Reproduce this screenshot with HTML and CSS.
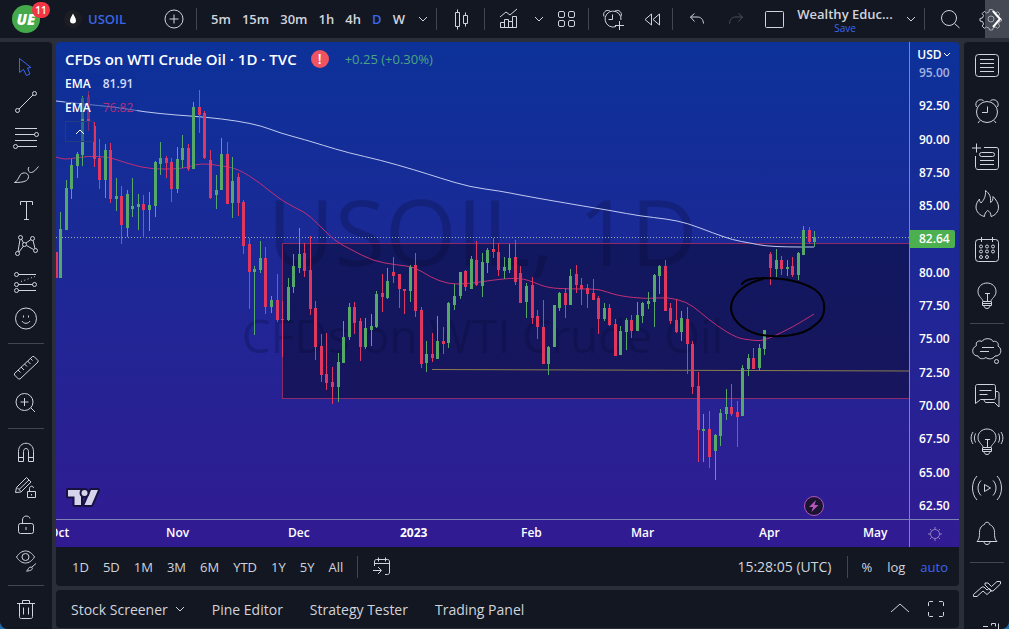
FILE: index.html
```html
<!DOCTYPE html>
<html lang="en">
<head>
  <meta charset="UTF-8" />
  <meta name="viewport" content="width=device-width, initial-scale=1.0" />
  <title>USOIL 82.64</title>
  <link rel="stylesheet" href="styles.css">
</head>
<body>
<div class="app">

  <header class="topbar">
    <button class="account" aria-label="Account"><span class="avatar">UE</span><span class="badge">11</span></button>
    <button class="symbol">
      <svg class="drop" viewBox="0 0 18 18"><circle cx="9" cy="9" r="9" fill="#1c1e24"/><path d="M9 3.500C10 6 12 8 12 10.500a3 3 0 0 1-6 0C6 8 8 6 9 3.500z" fill="#fff"/></svg>
      USOIL
    </button>
    <button class="tool line" aria-label="Compare"><svg class="icon" viewBox="0 0 28 28"><circle cx="15" cy="14" r="9"/><path d="M15 9.500v9M10.500 14h9"/></svg></button>
    <nav class="intervals">
      <button>5m</button><button>15m</button><button>30m</button><button>1h</button><button>4h</button><button class="active">D</button><button>W</button>
    </nav>
    <button class="tool arrow line" aria-label="Intervals"><svg class="mini" viewBox="0 0 10 10"><path d="M1 3l4 4 4-4"/></svg></button>
    <button class="tool line" aria-label="Chart type"><svg class="icon" viewBox="0 0 28 28"><path d="M8.500 7.500h4v14h-4zM10.500 4.500v3M10.500 21.500v3M16.500 10.500h4v8h-4zM18.500 7.500v3M18.500 18.500v3"/></svg></button>
    <button class="tool" aria-label="Indicators"><svg class="icon" viewBox="0 0 28 28"><path d="M5 12l6-5 4 3 7-6M5.500 22.500v-5h4v5zM9.500 22.500v-8h4v8M13.500 22.500v-6h4v6M17.500 22.500v-11h4v11zM5.500 22.500h16"/></svg></button>
    <button class="tool slim" aria-label="Indicator templates"><svg class="mini" viewBox="0 0 10 10"><path d="M1 3l4 4 4-4"/></svg></button>
    <button class="tool grid line" aria-label="Layout grid"><svg class="icon" viewBox="0 0 28 28"><rect x="5.500" y="6.500" width="6" height="6" rx="1.500"/><rect x="15.500" y="6.500" width="6" height="6" rx="1.500"/><rect x="5.500" y="15.500" width="6" height="6" rx="1.500"/><rect x="15.500" y="15.500" width="6" height="6" rx="1.500"/></svg></button>
    <button class="tool" aria-label="Add alert"><svg class="icon" viewBox="0 0 28 28"><path d="M17 21.500a8 8 0 1 1 5-6.500M13.500 9.500v5h-4M5 11.500c-1.500-4 2-7.500 6-5.500M22 11.500c1.500-4-2-7.500-6-5.500M20.500 16v9M16 20.500h9"/></svg></button>
    <button class="tool small line" aria-label="Replay"><svg class="icon" viewBox="0 0 28 28"><path d="M10.500 9v11L4 14.500zM18.500 9v11L12 14.500z"/></svg></button>
    <button class="tool" aria-label="Undo"><svg class="icon" viewBox="0 0 28 28"><path d="M11.500 8.500L7.500 12l4 4.500M7.500 12H14c4 0 6 2 6.500 6.500"/></svg></button>
    <button class="tool small off" aria-label="Redo"><svg class="icon" viewBox="0 0 28 28"><path d="M13.500 8.500l4 3.500-4 4.500M17.500 12H11c-4 0-6 2-6.500 6.500"/></svg></button>
    <button class="tool small" aria-label="Layout"><svg class="icon" viewBox="0 0 28 28"><rect x="4.500" y="6.500" width="18" height="16" rx="1"/></svg></button>
    <button class="layout-name"><span>Wealthy Educ...</span><span class="save">Save</span></button>
    <button class="tool arrow line" aria-label="Manage layouts"><svg class="mini" viewBox="0 0 10 10"><path d="M1 3l4 4 4-4"/></svg></button>
    <button class="tool" aria-label="Search"><svg class="icon" viewBox="0 0 28 28"><circle cx="14" cy="13" r="7.500"/><path d="M19.500 18.500l5 4.500"/></svg></button>
    <button class="tool small" aria-label="Settings"><svg class="icon" viewBox="0 0 28 28"><circle cx="14" cy="14" r="3"/><path d="M12.500 4.500h3l.5 2.500 2.500 1 2.200-1.300 2.100 2.100L21.500 11l1 2.500 2 .5v2l-2 .5-1 2.500 1.300 2.200-2.100 2.100-2.200-1.300-2.500 1-.5 2h-3l-.5-2-2.500-1-2.200 1.300-2.100-2.100L6.500 19l-1-2.500-2.500-.5v-2.500l2.500-.5 1-2.500-1.300-2 2.100-2.100L9.500 8 12 7z"/></svg></button>
    <button class="scroll-right" aria-label="Scroll right"><svg class="scroll-arrow" viewBox="0 0 12 20"><path d="M2 2l7 8-7 8"/></svg></button>
  </header>

  <aside class="drawbar">
    <button class="active" aria-label="Cursor"><svg class="icon" viewBox="0 0 28 28"><path d="M7.500 5.500v14l4-3 3 6 3.500-1.500-2.500-6 3.500-.5z"/></svg></button>
    <button aria-label="Trend line"><svg class="icon" viewBox="0 0 28 28"><circle cx="22.500" cy="4.500" r="2"/><circle cx="5.500" cy="21.500" r="2"/><path d="M7 20L21 6"/></svg></button>
    <button aria-label="Fib retracement"><svg class="icon" viewBox="0 0 28 28"><path d="M3 3.500h22M3 9.500h19.500M3 15.500h22M6 21.500h19"/><circle cx="24.500" cy="9.500" r="2"/><circle cx="3.500" cy="21.500" r="2"/></svg></button>
    <button aria-label="Brush"><svg class="icon" viewBox="0 0 28 28"><path d="M2.500 21.500c3-1 4-5 6-8 3-3 8-1.500 8 2 0 4.500-4.500 6-14 6zM17 6c-2 2.500 0 6 2.500 5.500 2.500-.5 4-2.500 7-6"/></svg></button>
    <button aria-label="Text"><svg class="icon" viewBox="0 0 28 28"><path d="M8.500 8V4.500h12V8M14.500 4.500v18M12 22.500h5"/></svg></button>
    <button aria-label="Patterns"><svg class="icon" viewBox="0 0 28 28"><circle cx="8.500" cy="4.500" r="2"/><circle cx="20.500" cy="5.500" r="2"/><circle cx="5.500" cy="20.500" r="2"/><circle cx="23.500" cy="17.500" r="2"/><circle cx="12.500" cy="11.500" r="2"/><path d="M8 6.500L6 18.500M9.500 6l2 4M14 10l5-3.500M21 7.500l2 8M7 19l4.500-6M14.500 12.500l7 4"/></svg></button>
    <button aria-label="Projection"><svg class="icon" viewBox="0 0 28 28"><circle cx="4.500" cy="5.500" r="2"/><circle cx="4.500" cy="15.500" r="2"/><circle cx="22.500" cy="15.500" r="2"/><circle cx="4.500" cy="21.500" r="2"/><path d="M6.500 5.500H24M6.500 15.500h14M6.500 21.500H24"/><path stroke-dasharray="1 2.500" d="M9 12.500L23 7.500"/></svg></button>
    <button aria-label="Icons"><svg class="icon" viewBox="0 0 28 28"><circle cx="14" cy="13.500" r="10.500"/><path d="M10 16c1.500 3 6.500 3 8 0M11.500 10.500v2M16.500 10.500v2"/></svg></button>
    <hr>
    <button aria-label="Measure"><svg class="icon" viewBox="0 0 28 28"><path d="M2.500 19.500l18-17 1.500 0 4 4v1.500l-18 17H6.500l-4-4zM6 16l2.500 2.500M9 13l3 3M12.500 10l2.500 2.500M15.500 7l3 3M18.500 4.500l2 2"/></svg></button>
    <button aria-label="Zoom in"><svg class="icon" viewBox="0 0 28 28"><circle cx="12.500" cy="12" r="8.500"/><path d="M12.500 8v8M8.500 12h8M19 18l4 4"/></svg></button>
    <hr>
    <button aria-label="Magnet"><svg class="icon" viewBox="0 0 28 28"><path d="M6.500 22.500v-10c0-11 15-11 15 0v10h-5v-10c0-4-5-4-5 0v10zM6.500 18.500h5M16.500 18.500h5"/></svg></button>
    <button aria-label="Stay in drawing mode"><svg class="icon" viewBox="0 0 28 28"><path d="M3.500 17.500l1-5L14.500 2.500 19 7 9 17zM5 12.500l4 4M7 14.500L17 5M15.500 16.500h8v6h-8zM17.500 16.500v-3c0-3 4-3 4-.5M19.500 19v1.500"/></svg></button>
    <button aria-label="Lock drawings"><svg class="icon" viewBox="0 0 28 28"><rect x="6.500" y="12.500" width="15" height="10" rx="2"/><path d="M10.500 12.500V9c0-5 6.500-5 7.500-1.500M14 16v3"/></svg></button>
    <button aria-label="Hide drawings"><svg class="icon" viewBox="0 0 28 28"><path d="M4.500 10c5-8 13-8 18 0-5 8-13 8-18 0z"/><circle cx="13.500" cy="10" r="3.500"/><path d="M14.500 24c2-1 1.500-4 4.500-4 2.500.5 2 4-4.500 4zM20 20l4-3.500"/></svg></button>
    <hr>
    <button aria-label="Remove"><svg class="icon" viewBox="0 0 28 28"><path d="M5 7.500h18M7.500 7.500v13c0 1.500.5 2 2 2h9c1.500 0 2-.5 2-2v-13M10.500 7.500v-3h7v3M11.500 11.500v7M16.500 11.500v7"/></svg></button>
  </aside>

  <main class="center">
    <section class="chart">
      <div class="pane">
        <div class="watermark"><span class="wm-symbol">USOIL, 1D</span><span class="wm-name">CFDs on WTI Crude Oil</span></div>
        <svg class="plot" viewBox="56 42 853 477" preserveAspectRatio="none" role="img" aria-label="WTI crude oil daily candles">
          <rect class="zone" x="282.500" y="243.500" width="640" height="155"/>
          <path class="support" d="M432 369.500L909 371"/>
          <path class="last-price" d="M56 237.500H909"/>
          <path class="ema-slow" id="emaSlow"/>
          <path class="ema-fast" id="emaFast"/>
          <g id="candles"></g>
          <path class="marker" d="M742 284c3-5 12-6 22-6 20 0 38 4 50 11 14 9 13 28 1 36-13 12-38 13-58 9-16-5-26-15-26-27 1-14 15-24 32-28"/>
        </svg>
        <div class="legend">
          <h1>CFDs on WTI Crude Oil · 1D · TVC <span class="alert">!</span><span class="change">+0.25 (+0.30%)</span></h1>
          <p><b>EMA</b><span>81.91</span></p>
          <p><b>EMA</b><span class="fast">76.82</span></p>
          <button aria-label="Collapse"><svg class="mini" viewBox="0 0 10 10"><path d="M1 7l4-4 4 4"/></svg></button>
        </div>
        <svg class="tv" viewBox="0 0 36 24"><path d="M3 4h13v15h-6.500v-8.500H3zM26 4h7l-6.500 15h-7z"/><circle cx="19.500" cy="7" r="3"/></svg>
        <button class="flash" aria-label="News"><svg viewBox="0 0 22 22"><circle cx="11" cy="11" r="9.500"/><path d="M13 5l-7 7h4l-1.500 5 7-7h-4z"/></svg></button>
      </div>
      <div class="prices">
        <button class="currency">USD<svg class="mini" viewBox="0 0 10 10"><path d="M2 4l3 3 3-3"/></svg></button>
        <ul>
          <li class="faded">95.00</li><li>92.50</li><li>90.00</li><li>87.50</li><li>85.00</li><li class="current">82.64</li><li>80.00</li><li>77.50</li><li>75.00</li><li>72.50</li><li>70.00</li><li>67.50</li><li>65.00</li><li>62.50</li>
        </ul>
      </div>
      <div class="dates"><span class="cut">Oct</span><span>Nov</span><span>Dec</span><b>2023</b><span>Feb</span><span>Mar</span><span>Apr</span><span>May</span></div>
      <button class="axis-gear" aria-label="Scale settings"><svg viewBox="0 0 16 16"><circle cx="8" cy="8" r="4.500"/><path d="M8 1v2M8 13v2M1 8h2M13 8h2M3 3l1.500 1.500M11.500 11.500L13 13M3 13l1.500-1.500M11.500 4.500L13 3"/></svg></button>
    </section>

    <div class="ranges">
      <button>1D</button><button>5D</button><button>1M</button><button>3M</button><button>6M</button><button>YTD</button><button>1Y</button><button>5Y</button><button>All</button>
      <button class="goto" aria-label="Go to date"><svg class="icon" viewBox="0 0 28 28"><path d="M6.500 13V9c0-1.500.5-2.500 2-2.500h11c1.500 0 2 1 2 2.500v10c0 1.500-.5 2.500-2 2.500H17M6.500 10.500h15M10.500 4.500v4M17.500 4.500v4M5 17.500h8M10 14l3.500 3.500L10 21"/></svg></button>
      <span class="clock">15:28:05 (UTC)</span>
      <div class="scale"><button>%</button><button>log</button><button class="active">auto</button></div>
    </div>

    <footer class="panels">
      <button>Stock Screener <svg class="mini" viewBox="0 0 10 10"><path d="M1 3l4 4 4-4"/></svg></button>
      <button>Pine Editor</button>
      <button>Strategy Tester</button>
      <button>Trading Panel</button>
      <div class="window-tools">
        <button aria-label="Open panel"><svg class="icon" viewBox="0 0 28 28"><path d="M5 17l9-8 9 8"/></svg></button>
        <button aria-label="Full screen"><svg class="icon" viewBox="0 0 28 28"><path d="M6.500 11V8c0-1 .5-1.500 1.500-1.500h3M17 6.500h3c1 0 1.500.5 1.500 1.500v3M21.500 17v3c0 1-.5 1.500-1.500 1.500h-3M11 21.500H8c-1 0-1.500-.5-1.500-1.500v-3"/></svg></button>
      </div>
    </footer>
  </main>

  <aside class="sidebar">
    <button aria-label="Watchlist"><svg class="icon" viewBox="0 0 28 28"><rect x="2.500" y="2.500" width="23" height="22" rx="3"/><path d="M7 7.500h14M7 11.500h14M7 15.500h14M7 19.500h14"/></svg></button>
    <button aria-label="Alerts"><svg class="icon" viewBox="0 0 28 28"><circle cx="14" cy="14" r="10.500"/><path d="M14.500 8.500v6H9M3.500 9C1 4 6 0 10.500 2.500M24.500 9c2.500-5-2.500-9-7-6.500M7 22.500l-2 2.500M21 22.500l2 2.500"/></svg></button>
    <button aria-label="Data window"><svg class="icon" viewBox="0 0 28 28"><path d="M3.500-.5v9M-1 4h9M11 3.500h12c2 0 2.500 1 2.500 2.500v16c0 2-.5 3.500-2.500 3.500H5c-2 0-2.500-1.500-2.500-3.500V12M7 16.500h14M7 20.500h14"/><rect x="6.500" y="8.500" width="15" height="4" rx="2"/></svg></button>
    <button aria-label="Hotlists"><svg class="icon" viewBox="0 0 28 28"><path d="M12.500.5c4 3 5.500 6 5 12 2-1 2.500-3 2.500-6 3 3 5.500 7 5.500 10.500 0 5-3.500 8.500-7.500 9.500 0-3.500-1.500-5-3.500-6-1.500 1.500-3 3-3 6C7 25.500 3 22 3 17c0-3 1.500-5.500 3.500-8 0 2 .5 3.500 1.500 4 3-3 5-7 4.500-12.500z"/></svg></button>
    <button aria-label="Calendar"><svg class="icon" viewBox="0 0 28 28"><rect x="2.500" y="3.500" width="23" height="22" rx="3"/><path d="M8.500 1v5M19.500 1v5"/><circle cx="8" cy="10.500" r="1.500"/><circle cx="14" cy="10.500" r="1.500"/><circle cx="20" cy="10.500" r="1.500"/><circle cx="8" cy="15.500" r="1.500"/><circle cx="14" cy="15.500" r="1.500"/><circle cx="20" cy="15.500" r="1.500"/><circle cx="8" cy="21" r="1.500"/><circle cx="14" cy="21" r="1.500"/></svg></button>
    <button aria-label="Ideas"><svg class="icon" viewBox="0 0 28 28"><path d="M10 19.500c0-3-5-4.500-5-10 0-5 4-8.500 9-8.500s9 3.500 9 8.500c0 5.500-5 7-5 10zM14.500 19v-7.500M12 11.500h5M9.500 19.500v4h9v-4M9.500 21.500h9M11 23.500c0 4 6 4 6 0"/></svg></button>
    <hr>
    <button aria-label="Minds"><svg class="icon" viewBox="0 0 28 28"><path d="M3.500 8.500c-1.500-4 3-5.500 5.500-4C11 .500 19 1 20 4.500c4-1 6 2 5 4.500 5 3 3 10.500-3 10-2 3.500-7 3.500-9 1.500-3 2-7 1.500-8-1.500-6 0-7.500-7.500-1.500-10.500zM9 10.500h12M7 14.500h9"/><circle cx="23.500" cy="24.500" r="2"/></svg></button>
    <button aria-label="Chat"><svg class="icon" viewBox="0 0 28 28"><path d="M2.500 20.500v-17c0-1 .5-2 2-2h16c1.500 0 2 1 2 2v11c0 1-.5 2-2 2h-13zM6.500 7.500h12M6.500 11.500h8M22.500 8.500h1.500c1.500 0 2 1 2 2v13.500l-4.500-4.500h-9l-2-3"/></svg></button>
    <button aria-label="Idea stream"><svg class="icon" viewBox="0 0 28 28"><path d="M10 18.500c0-3-5-4.500-5-10C5 3.500 9 0 14 0s9 3.500 9 8.500c0 5.500-5 7-5 10zM14.500 18v-7.500M12 10.500h5M9.500 18.500v4h9v-4M9.500 20.500h9M11 22.500c0 4 6 4 6 0M2.500 4.500c-1.500 3-1.500 6 0 9M0 3c-2.500 4-2.500 8 0 12M25.500 4.500c1.500 3 1.500 6 0 9M28 3c2.500 4 2.500 8 0 12"/></svg></button>
    <button aria-label="Streams"><svg class="icon" viewBox="0 0 28 28"><path d="M11.500 9.500v7l6-3.500zM8 5.500c-4 4-4 11 0 15M20 5.500c4 4 4 11 0 15M4 1c-6 6-6 18 0 24M24 1c6 6 6 18 0 24"/></svg></button>
    <button aria-label="Notifications"><svg class="icon" viewBox="0 0 28 28"><path d="M4 20.500h20c-2-2-2.500-4-2.500-9 0-5-2.500-7-5-8 0-3-5-3-5 0-2.500 1-5 3-5 8 0 5-.5 7-2.500 9zM11 20.500c0 4 6 4 6 0"/></svg></button>
    <hr>
    <button aria-label="Order panel"><svg class="icon" viewBox="0 0 28 28"><path d="M.500 18.500l8.500-7.500h2l3 3 2-1.500 2.500 2-4.500 4-4-3.500-6 5.500H.500zM27.500 5.500h-3.500l-5.500 5-3.500-3.500-3 0v2l6 6h2l7.500-7z"/></svg></button>
    <button aria-label="Market depth"><svg class="icon" viewBox="0 0 28 28"><path d="M10 4.500h5M18.500 3.500v-2h4v3M25.500 1.500v20"/></svg></button>
  </aside>

</div>
<script src="script.js"></script>
</body>
</html>
```
FILE: styles.css
```css
* {
  box-sizing: border-box;
}
body {
  margin: 0;
  background: #1c6cab;
  color: #d1d4dc;
  font-family: "Trebuchet MS", "Open Sans", "Noto Sans", sans-serif;
  font-size: 13px;
}
button {
  display: flex;
  align-items: center;
  justify-content: center;
  margin: 0;
  padding: 0;
  border: 0;
  background: none;
  color: inherit;
  font: inherit;
  cursor: pointer;
}
svg {
  display: block;
  flex: none;
}
hr {
  flex: none;
  width: 36px;
  height: 1px;
  margin: 6px 0;
  border: 0;
  background: #434651;
}
.icon {
  width: 28px;
  height: 28px;
  fill: none;
  stroke: currentColor;
  overflow: visible;
}
.mini {
  width: 10px;
  height: 10px;
  fill: none;
  stroke: currentColor;
}
.app {
  display: grid;
  grid-template-columns: 52px minmax(0, 1fr) 45px;
  grid-template-rows: 38px minmax(0, 1fr);
  gap: 4px;
  height: 100vh;
  background: #2a2e39;
  border-radius: 0 0 8px 8px;
  overflow: hidden;
}

/* top bar */
.topbar {
  grid-column: 1 / -1;
  position: relative;
  display: flex;
  background: #131722;
  overflow: hidden;
}
.account {
  position: relative;
  width: 52px;
}
.avatar {
  width: 28px;
  height: 28px;
  border-radius: 50%;
  background: #43a94a;
  color: #fff;
  font-size: 15px;
  font-weight: 800;
  font-style: italic;
  line-height: 28px;
}
.badge {
  position: absolute;
  left: 32px;
  top: 2px;
  width: 18px;
  border-radius: 9px;
  background: #f23645;
  color: #fff;
  font-size: 10px;
  font-weight: 600;
  line-height: 16px;
}
.symbol {
  width: 97px;
  padding-left: 12px;
  gap: 6px;
  justify-content: flex-start;
  color: #3a66e0;
  font-weight: 600;
}
.drop {
  width: 18px;
  height: 18px;
}
.tool {
  position: relative;
  flex: none;
  width: 48px;
}
.tool.small {
  width: 36px;
}
.tool.grid {
  width: 44px;
}
.tool.arrow {
  width: 28px;
}
.tool.slim {
  width: 12px;
}
.tool.off {
  color: #4a4e59;
}
.line::after {
  content: "";
  align-self: center;
  position: absolute;
  right: 0;
  width: 1px;
  height: 22px;
  background: #434651;
}
.intervals {
  display: flex;
  justify-content: space-between;
  width: 212px;
  padding: 0 4px 0 14px;
  font-weight: 600;
}
.active {
  color: #3a66f0;
}
.layout-name {
  flex: 1;
  flex-direction: column;
  min-width: 96px;
  font-weight: 600;
  line-height: 18px;
  white-space: nowrap;
}
.save {
  color: #3a66f0;
  font-size: 10px;
  font-weight: 400;
  line-height: 10px;
}
.scroll-right {
  position: absolute;
  right: 0;
  top: 0;
  width: 24px;
  height: 38px;
  background: rgba(120, 123, 134, 0.5);
}
.scroll-arrow {
  width: 12px;
  height: 20px;
  fill: none;
  stroke: #fff;
  stroke-width: 2;
}

/* side bars */
.drawbar,
.sidebar {
  display: flex;
  flex-direction: column;
  align-items: center;
  background: #131722;
  overflow: hidden;
}
.drawbar {
  padding-top: 7px;
  border-radius: 0 4px 0 0;
}
.drawbar button {
  flex: none;
  width: 52px;
  height: 36px;
}
.sidebar {
  padding-top: 1px;
  border-radius: 4px 0 0 0;
}
.sidebar button {
  flex: none;
  width: 45px;
  height: 46px;
}
.sidebar hr {
  width: 34px;
  margin: 4px 0;
}

/* chart */
.center {
  display: flex;
  flex-direction: column;
  min-width: 0;
  margin-right: 1px;
}
.chart {
  flex: 1;
  display: grid;
  grid-template-columns: minmax(0, 1fr) 50px;
  grid-template-rows: minmax(0, 1fr) 28px;
  min-height: 0;
  border-radius: 4px 4px 0 0;
  background: linear-gradient(#0c3299, #311b92);
  color: #fff;
  font-size: 12px;
  font-weight: 600;
  overflow: hidden;
}
.pane {
  position: relative;
  overflow: hidden;
}
.watermark {
  position: absolute;
  inset: 0;
  display: flex;
  flex-direction: column;
  align-items: center;
  justify-content: center;
  padding-bottom: 12px;
  color: rgba(10, 12, 60, 0.3);
  font-weight: 400;
  white-space: nowrap;
}
.wm-symbol {
  font-size: 92px;
  line-height: 120px;
}
.wm-name {
  font-size: 46px;
  line-height: 88px;
}
.plot {
  position: absolute;
  inset: 0;
  width: 100%;
  height: 100%;
  fill: none;
}
.zone {
  fill: rgba(8, 8, 40, 0.5);
  stroke: #8c2b66;
}
.support {
  stroke: #8a7d4e;
}
.last-price {
  stroke: #8fb5b0;
  stroke-dasharray: 1 2;
}
.ema-slow {
  stroke: #c0caf0;
}
.ema-fast {
  stroke: #c22f73;
}
.up {
  fill: #55a868;
}
.down {
  fill: #e0375f;
}
.marker {
  stroke: #000;
  stroke-width: 2;
  stroke-linecap: round;
}
.legend {
  position: absolute;
  left: 9px;
  top: 5px;
}
.legend h1 {
  display: flex;
  align-items: center;
  margin: 0;
  font-size: 15px;
  font-weight: 600;
  line-height: 24px;
}
.alert {
  width: 18px;
  height: 18px;
  margin: 0 16px 0 14px;
  border-radius: 50%;
  background: #ef5360;
  font-size: 14px;
  line-height: 18px;
  text-align: center;
}
.change {
  color: #4ba582;
  font-size: 13px;
  font-weight: 400;
}
.legend p {
  display: flex;
  gap: 12px;
  width: 72px;
  margin: 2px 0;
  background: rgba(15, 46, 152, 0.5);
  line-height: 22px;
}
.legend b {
  font-weight: 600;
}
.legend p span {
  color: #d3dcf8;
}
.legend p .fast {
  color: #b0307c;
  font-weight: 400;
}
.legend button {
  width: 29px;
  height: 21px;
  border: 1px solid #253a80;
  background: rgba(15, 46, 152, 0.5);
}
.tv {
  position: absolute;
  left: 9px;
  bottom: 9px;
  width: 36px;
  height: 24px;
  fill: #d6d3ec;
  stroke: #15123f;
  stroke-width: 4;
  stroke-linejoin: round;
  paint-order: stroke;
}
.flash {
  position: absolute;
  right: 84px;
  bottom: 2px;
}
.flash svg {
  width: 22px;
  height: 22px;
  fill: #1a1430;
  stroke: #b458b8;
}
.flash path {
  fill: #b458b8;
  stroke: none;
}
.prices {
  display: flex;
  flex-direction: column;
  border-left: 1px solid #7f83b4;
}
.currency {
  height: 22px;
  padding-top: 2px;
}
.prices ul {
  flex: 1;
  display: flex;
  flex-direction: column;
  justify-content: space-between;
  margin: 0;
  padding: 0 0 4px;
  list-style: none;
  line-height: 18px;
}
.prices li {
  padding-left: 9px;
}
.prices .faded {
  color: #a3b2e0;
}
.prices .current {
  width: 45px;
  border-radius: 0 2px 2px 0;
  background: #4caf50;
}
.dates {
  display: grid;
  grid-template-columns: 110fr 122fr 112fr 121fr 110fr 128fr 104fr 46fr;
  border-top: 1px solid #7f83b4;
  background: #311b92;
  line-height: 26px;
  overflow: hidden;
}
.dates b {
  font-weight: 700;
}
.dates .cut {
  margin-left: -7px;
}
.axis-gear {
  border-top: 1px solid #7f83b4;
  border-left: 1px solid #7f83b4;
}
.axis-gear svg {
  width: 16px;
  height: 16px;
  fill: none;
  stroke: #8f80bd;
}

/* bottom bars */
.ranges,
.panels {
  display: flex;
  align-items: center;
  background: #131722;
}
.ranges {
  gap: 14px;
  height: 39px;
  margin-bottom: 4px;
  padding: 0 11px 0 16px;
  border-radius: 0 0 4px 4px;
}
.goto {
  height: 22px;
  padding-left: 10px;
  border-left: 1px solid #434651;
}
.clock {
  margin-left: auto;
  font-size: 14px;
}
.scale {
  display: flex;
  align-items: center;
  gap: 15px;
  height: 22px;
  margin-left: 2px;
  padding-left: 13px;
  border-left: 1px solid #434651;
}
.panels {
  gap: 27px;
  height: 38px;
  margin-bottom: 1px;
  padding: 0 9px 0 15px;
  border-radius: 4px;
  font-size: 14px;
}
.panels > button {
  gap: 7px;
}
.window-tools {
  display: flex;
  gap: 8px;
  margin-left: auto;
}
```
FILE: script.js
```javascript
// x, high, body top, body bottom, low, up (1) or down (0)
const candles = [
  [56,252,252,278,278,0],[60,212,229,278,278,1],[66,180,188,230,230,1],[71,159,165,189,199,1],
  [77,152,154,166,178,1],[82,96,98,155,166,1],[88,91,97,121,131,0],[94,122,126,159,167,0],
  [99,139,158,180,189,0],[105,144,150,180,198,1],[110,143,150,199,203,0],[116,178,196,199,211,1],
  [121,186,196,225,244,0],[127,190,194,228,237,1],[132,178,206,209,217,1],[138,194,204,207,230,1],
  [143,195,204,210,238,0],[149,192,205,210,231,1],[155,161,162,206,217,1],[160,142,158,164,175,1],
  [166,156,158,163,178,0],[171,158,162,189,202,0],[177,147,159,189,193,1],[182,135,148,160,168,1],
  [188,144,148,169,171,0],[193,102,107,169,169,1],[199,90,107,115,133,0],[204,111,113,158,159,0],
  [210,150,160,198,199,0],[216,175,190,195,209,1],[221,138,154,190,190,1],[227,142,154,204,204,0],
  [232,157,181,203,218,1],[238,173,177,203,216,0],[243,200,202,246,254,0],[249,238,244,272,309,0],
  [254,266,269,272,335,1],[260,241,258,270,273,1],[265,247,258,307,314,0],[271,296,300,307,313,1],
  [277,274,300,320,322,0],[282,301,319,320,357,0],[288,278,287,320,321,1],[293,254,266,287,293,1],
  [299,228,254,268,273,1],[304,243,253,271,277,0],[310,236,270,309,315,0],[315,301,308,347,360,0],
  [321,334,346,375,382,0],[326,333,374,383,390,0],[332,367,382,387,404,0],[338,353,362,387,402,1],
  [343,321,337,363,363,1],[349,303,307,337,340,1],[354,302,307,323,334,0],[360,318,321,347,361,0],
  [365,318,328,347,349,1],[371,314,326,330,346,1],[376,291,294,327,328,1],[382,274,293,297,312,0],
  [387,268,281,298,299,1],[393,257,272,276,283,0],[399,274,274,289,308,0],[404,289,289,291,314,0],
  [410,265,267,291,302,1],[415,253,265,311,317,0],[421,307,310,364,368,0],[426,341,354,363,372,1],
  [432,333,354,358,362,0],[437,316,341,359,359,1],[443,327,341,344,354,0],[448,302,303,343,348,1],
  [454,284,296,305,310,1],[460,272,272,296,299,1],[465,270,271,287,291,0],[471,256,259,289,289,1],
  [476,241,260,285,286,0],[482,253,262,286,297,1],[487,248,250,263,273,1],[493,238,249,252,258,0],
  [498,243,252,270,276,0],[504,257,267,271,279,1],[509,244,258,270,273,1],[515,240,257,282,285,0],
  [520,266,273,303,303,0],[526,283,286,302,318,1],[532,277,285,318,324,0],[537,310,316,327,339,0],
  [543,300,327,364,364,0],[548,346,347,364,375,1],[554,305,305,347,347,1],[559,292,293,308,311,1],
  [565,288,293,305,318,0],[570,269,276,305,305,1],[576,265,274,285,293,0],[581,278,285,289,305,0],
  [587,284,288,294,308,0],[593,279,293,300,300,0],[598,296,298,319,334,0],[604,303,308,319,321,1],
  [609,304,308,325,326,0],[615,319,324,356,356,0],[620,326,331,355,355,1],[626,318,320,332,350,1],
  [631,315,320,331,338,0],[637,302,315,331,331,1],[642,302,303,316,323,1],[648,292,301,304,309,1],
  [654,274,275,302,327,1],[659,265,266,276,294,1],[665,260,266,311,311,0],[670,303,308,321,324,0],
  [676,299,320,332,333,0],[681,311,318,332,341,1],[687,307,319,344,374,0],[692,341,344,387,394,0],
  [698,372,386,430,462,0],[703,414,429,431,462,1],[709,411,429,457,468,0],[715,434,435,451,480,1],
  [720,409,413,436,446,1],[726,389,407,414,420,1],[731,384,407,414,416,0],[737,401,412,417,447,0],
  [742,365,368,416,416,1],[748,354,358,369,376,1],[753,348,358,369,369,0],[759,344,348,368,370,1],
  [764,330,330,349,355,1],[770,252,254,268,285,0],[776,249,260,269,277,1],[781,256,260,269,275,0],
  [787,260,267,269,276,1],[792,257,266,275,277,0],[798,252,253,275,280,1],[803,226,230,255,255,1],
  [809,227,230,242,244,0],[814,231,237,242,247,1]
];

const emaSlow = [
  [56,101],[82,104],[115,107],[145,112],[175,115],[205,117],[238,121],[262,126],[280,133],[306,140],
  [322,145],[349,153],[380,160],[415,170],[440,178],[470,187],[500,191],[520,195],[548,200],[583,206],
  [613,211],[640,216],[667,219],[687,223],[713,233],[733,240],[750,243],[765,246],[787,247],[814,247]
];
const emaFast = [
  [56,157],[62,159],[69,159],[88,156],[109,157],[123,162],[148,169],[183,169],[200,163],[223,166],
  [238,169],[259,182],[283,202],[305,212],[317,223],[335,241],[350,249],[373,261],[397,265],[415,267],
  [430,277],[448,284],[467,284],[493,280],[513,278],[524,279],[533,282],[548,288],[572,289],[597,289],
  [607,292],[620,296],[647,299],[667,297],[687,302],[700,312],[717,326],[737,338],[750,340],[760,341],
  [770,338],[793,327],[814,314]
];

function bar(x, y, width, height, name) {
  const rect = document.createElementNS('http://www.w3.org/2000/svg', 'rect');
  rect.setAttribute('x', x);
  rect.setAttribute('y', y);
  rect.setAttribute('width', width);
  rect.setAttribute('height', height);
  rect.setAttribute('class', name);
  return rect;
}

// curve through the midpoints so the averages look smooth
function smooth(points) {
  let d = `M${points[0][0]} ${points[0][1]}`;
  for (let i = 1; i < points.length - 1; i++) {
    const [x, y] = points[i];
    const [nx, ny] = points[i + 1];
    d += `Q${x} ${y} ${(x + nx) / 2} ${(y + ny) / 2}`;
  }
  const last = points[points.length - 1];
  return d + `L${last[0]} ${last[1]}`;
}

document.getElementById('emaSlow').setAttribute('d', smooth(emaSlow));
document.getElementById('emaFast').setAttribute('d', smooth(emaFast));

const group = document.getElementById('candles');
candles.forEach(([x, high, top, bottom, low, up]) => {
  const name = up ? 'up' : 'down';
  group.appendChild(bar(x, high, 1, low - high, name));
  group.appendChild(bar(x - 1, top, 3, bottom - top, name));
});
```
